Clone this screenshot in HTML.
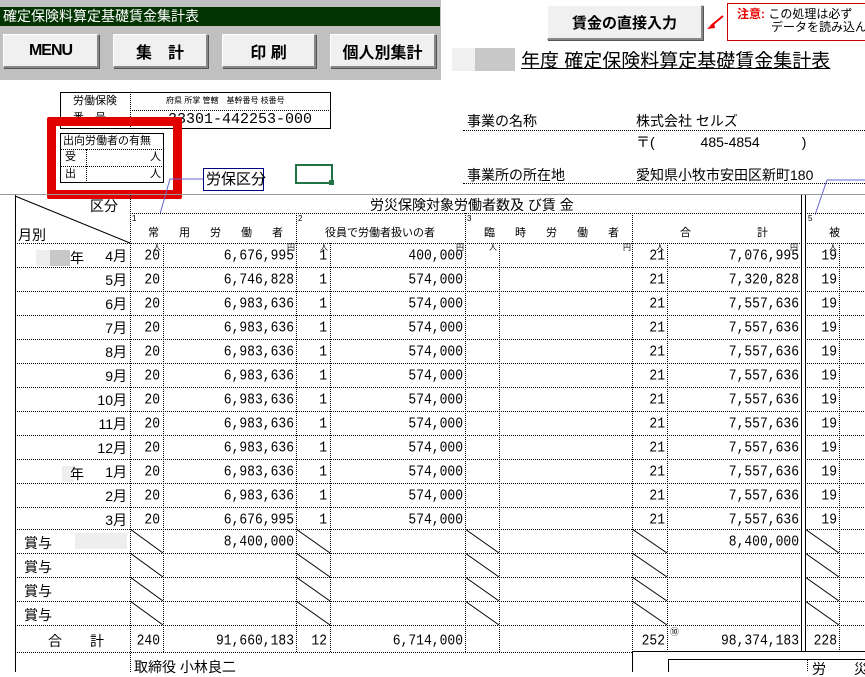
<!DOCTYPE html>
<html><head><meta charset="utf-8"><style>
*{margin:0;padding:0;box-sizing:border-box}
body{width:865px;height:672px;overflow:hidden;background:#fff;position:relative;font-family:"Liberation Sans","Noto Sans CJK JP",sans-serif;color:#000}
.a{position:absolute;white-space:nowrap;line-height:1}
.btn{position:absolute;background:#f0f0f0;border:1px solid #fff;border-right:2px solid #888;border-bottom:2px solid #888;box-shadow:1px 1px 0 #555;font-size:16px;font-weight:bold;display:flex;align-items:center;justify-content:center}
.t{position:absolute;font-size:14px;line-height:1;white-space:nowrap}
.n{font-family:"Liberation Mono",monospace;font-size:13px;transform:scaleY(1.15);transform-origin:bottom}
.r{text-align:right}
.s{position:absolute;font-size:8px;line-height:1}
</style></head><body>
<div class="a" style="left:0;top:0;width:441px;height:80px;background:#c0c0c0"></div>
<div class="a" style="left:0;top:7px;width:440px;height:19px;background:#003300;color:#fff;font-size:14px;padding:2px 3px">確定保険料算定基礎賃金集計表</div>
<div class="btn" style="left:3px;top:34px;width:96px;height:34px;letter-spacing:-1px">MENU</div>
<div class="btn" style="left:113px;top:34px;width:95px;height:34px">集　計</div>
<div class="btn" style="left:222px;top:34px;width:94px;height:34px">印 刷</div>
<div class="btn" style="left:330px;top:34px;width:106px;height:34px">個人別集計</div>
<div class="btn" style="left:547px;top:5px;width:156px;height:35px;font-size:15px">賃金の直接入力</div>
<svg class="a" style="left:703px;top:12px" width="24" height="20"><line x1="20" y1="4" x2="8" y2="14" stroke="#e00" stroke-width="2"/><polygon points="4,17 11,10 12,16" fill="#e00"/></svg>
<div class="a" style="left:727px;top:3px;width:140px;height:38px;border:1px solid #c00;font-size:12px;padding:4px 0 0 9px;line-height:13px"><b style="color:#e00">注意:</b> この処理は必ず<br><span style="padding-left:34px">データを読み込ん</span></div>
<div class="a" style="left:452px;top:48px;width:34px;height:23px;background:#f0f0f0"></div>
<div class="a" style="left:475px;top:48px;width:40px;height:23px;background:#c8c8c8"></div>
<div class="a" style="left:521px;top:52px;font-size:19px;text-decoration:underline">年度 確定保険料算定基礎賃金集計表</div>

<div class="a" style="left:60px;top:92px;width:271px;height:37px;border:1px solid #000"></div>
<div class="a" style="left:130px;top:92px;height:37px;border-left:1px dotted #000"></div>
<div class="a" style="left:130px;top:110px;width:201px;border-top:1px dotted #000"></div>
<div class="a" style="left:73px;top:96px;font-size:11px">労働保険</div>
<div class="a" style="left:166px;top:97px;font-size:8px">府県 所掌 管轄　基幹番号 枝番号</div>
<div class="a" style="left:168px;top:112px;font-size:15px;font-family:'Liberation Mono',monospace">33301-442253-000</div>
<div class="a" style="left:73px;top:113px;font-size:11px">番　号</div>
<div class="a" style="left:60px;top:133px;width:104px;height:50px;border:1px solid #000;background:#fff"></div>
<div class="a" style="left:60px;top:149px;width:104px;border-top:1px dotted #000"></div>
<div class="a" style="left:60px;top:166px;width:104px;border-top:1px dotted #000"></div>
<div class="a" style="left:86px;top:149px;height:34px;border-left:1px dotted #000"></div>
<div class="a" style="left:63px;top:136px;font-size:11px">出向労働者の有無</div>
<div class="a" style="left:65px;top:152px;font-size:11px">受</div><div class="a" style="left:150px;top:152px;font-size:11px">人</div>
<div class="a" style="left:65px;top:169px;font-size:11px">出</div><div class="a" style="left:150px;top:169px;font-size:11px">人</div>
<div class="a" style="left:47px;top:117px;width:135px;height:82px;border:9px solid #e00000;border-radius:2px"></div>
<svg class="a" style="left:160px;top:175px" width="45" height="40"><polyline points="0,39 10,4 43,4" fill="none" stroke="#6666cc" stroke-width="1"/></svg>
<div class="a" style="left:203px;top:168px;width:61px;height:23px;border:1px solid #000080;font-size:15px;padding:3px 2px">労保区分</div>
<div class="a" style="left:295px;top:164px;width:38px;height:20px;border:2px solid #217346"></div>
<div class="a" style="left:329px;top:180px;width:5px;height:5px;background:#217346"></div>

<div class="t" style="left:467px;top:114px">事業の名称</div>
<div class="t" style="left:636px;top:114px">株式会社 セルズ</div>
<div class="a" style="left:463px;top:130px;width:402px;border-top:1px dotted #000"></div>
<div class="t" style="left:636px;top:135px">〒(　　　 485-4854　　　)</div>
<div class="t" style="left:467px;top:168px">事業所の所在地</div>
<div class="t" style="left:636px;top:168px">愛知県小牧市安田区新町180</div>
<div class="a" style="left:463px;top:183px;width:402px;border-top:1px dotted #000"></div>
<svg class="a" style="left:815px;top:177px" width="50" height="40"><polyline points="0,38 12,3 50,3" fill="none" stroke="#6666cc"/></svg>

<svg class="a" style="left:0;top:0" width="865" height="672">
<g stroke="#000" fill="none">
<line x1="0" y1="194.5" x2="865" y2="194.5" stroke="#999"/>
<line x1="15.5" y1="195" x2="15.5" y2="672"/>
<line x1="15" y1="196" x2="130" y2="243"/>
<g stroke-dasharray="1,1">
<line x1="130" y1="213.5" x2="801" y2="213.5"/>
<line x1="805" y1="213.5" x2="865" y2="213.5"/>
<line x1="130.5" y1="195" x2="130.5" y2="672"/>
<line x1="296.5" y1="213" x2="296.5" y2="652"/>
<line x1="465.5" y1="213" x2="465.5" y2="652"/>
<line x1="632.5" y1="213" x2="632.5" y2="652"/>
<line x1="163.5" y1="243" x2="163.5" y2="652"/>
<line x1="330.5" y1="243" x2="330.5" y2="652"/>
<line x1="499.5" y1="243" x2="499.5" y2="652"/>
<line x1="667.5" y1="243" x2="667.5" y2="652"/>
<line x1="839.5" y1="243" x2="839.5" y2="652"/>
<line x1="15" y1="243.5" x2="801" y2="243.5"/><line x1="805" y1="243.5" x2="865" y2="243.5"/>
</g>
<line x1="801.5" y1="195" x2="801.5" y2="652"/>
<line x1="805.5" y1="195" x2="805.5" y2="652"/>
<line x1="632" y1="651.5" x2="865" y2="651.5"/>
<line x1="632.5" y1="652" x2="632.5" y2="672"/>
<line x1="668" y1="659.5" x2="865" y2="659.5"/>
<line x1="668.5" y1="659" x2="668.5" y2="672"/>
<line x1="807.5" y1="660" x2="807.5" y2="672" stroke-dasharray="1,1"/>
</g>
<g stroke="#000" stroke-dasharray="1,1" fill="none">
<line x1="15" y1="267.5" x2="801" y2="267.5"/><line x1="15" y1="291.5" x2="801" y2="291.5"/><line x1="15" y1="315.5" x2="801" y2="315.5"/><line x1="15" y1="339.5" x2="801" y2="339.5"/><line x1="15" y1="363.5" x2="801" y2="363.5"/><line x1="15" y1="387.5" x2="801" y2="387.5"/><line x1="15" y1="411.5" x2="801" y2="411.5"/><line x1="15" y1="435.5" x2="801" y2="435.5"/><line x1="15" y1="459.5" x2="801" y2="459.5"/><line x1="15" y1="483.5" x2="801" y2="483.5"/><line x1="15" y1="507.5" x2="801" y2="507.5"/><line x1="15" y1="529.5" x2="801" y2="529.5"/><line x1="15" y1="553.5" x2="801" y2="553.5"/><line x1="15" y1="577.5" x2="801" y2="577.5"/><line x1="15" y1="601.5" x2="801" y2="601.5"/><line x1="15" y1="625.5" x2="801" y2="625.5"/><line x1="15" y1="652.5" x2="632" y2="652.5"/>
<line x1="805" y1="267.5" x2="865" y2="267.5"/><line x1="805" y1="291.5" x2="865" y2="291.5"/><line x1="805" y1="315.5" x2="865" y2="315.5"/><line x1="805" y1="339.5" x2="865" y2="339.5"/><line x1="805" y1="363.5" x2="865" y2="363.5"/><line x1="805" y1="387.5" x2="865" y2="387.5"/><line x1="805" y1="411.5" x2="865" y2="411.5"/><line x1="805" y1="435.5" x2="865" y2="435.5"/><line x1="805" y1="459.5" x2="865" y2="459.5"/><line x1="805" y1="483.5" x2="865" y2="483.5"/><line x1="805" y1="507.5" x2="865" y2="507.5"/><line x1="805" y1="529.5" x2="865" y2="529.5"/><line x1="805" y1="553.5" x2="865" y2="553.5"/><line x1="805" y1="577.5" x2="865" y2="577.5"/><line x1="805" y1="601.5" x2="865" y2="601.5"/><line x1="805" y1="625.5" x2="865" y2="625.5"/>
</g>
<g stroke="#000">
<line x1="130" y1="529" x2="163" y2="553"/><line x1="296" y1="529" x2="330" y2="553"/><line x1="465" y1="529" x2="499" y2="553"/><line x1="632" y1="529" x2="667" y2="553"/><line x1="805" y1="529" x2="839" y2="553"/>
<line x1="130" y1="553" x2="163" y2="577"/><line x1="296" y1="553" x2="330" y2="577"/><line x1="465" y1="553" x2="499" y2="577"/><line x1="632" y1="553" x2="667" y2="577"/><line x1="805" y1="553" x2="839" y2="577"/>
<line x1="130" y1="577" x2="163" y2="601"/><line x1="296" y1="577" x2="330" y2="601"/><line x1="465" y1="577" x2="499" y2="601"/><line x1="632" y1="577" x2="667" y2="601"/><line x1="805" y1="577" x2="839" y2="601"/>
<line x1="130" y1="601" x2="163" y2="625"/><line x1="296" y1="601" x2="330" y2="625"/><line x1="465" y1="601" x2="499" y2="625"/><line x1="632" y1="601" x2="667" y2="625"/><line x1="805" y1="601" x2="839" y2="625"/>
</g>
</svg>

<div class="t" style="left:90px;top:199px">区分</div>
<div class="t" style="left:18px;top:228px">月別</div>
<div class="t" style="left:370px;top:198px">労災保険対象労働者数及 び賃 金</div>
<div class="s" style="left:132px;top:215px">1</div><div class="s" style="left:298px;top:215px">2</div><div class="s" style="left:467px;top:215px">3</div><div class="s" style="left:808px;top:215px">5</div>
<div class="a" style="left:148px;top:228px;font-size:11px;letter-spacing:20px">常用労働者</div>
<div class="a" style="left:325px;top:228px;font-size:11px">役員で労働者扱いの者</div>
<div class="a" style="left:484px;top:228px;font-size:11px;letter-spacing:20px">臨時労働者</div>
<div class="a" style="left:680px;top:228px;font-size:11px">合　　　　　　計</div>
<div class="a" style="left:829px;top:228px;font-size:11px">被</div>
<div class="s" style="left:153px;top:244px">人</div><div class="s" style="left:287px;top:244px">円</div><div class="s" style="left:320px;top:244px">人</div><div class="s" style="left:456px;top:244px">円</div><div class="s" style="left:489px;top:244px">人</div><div class="s" style="left:623px;top:244px">円</div><div class="s" style="left:656px;top:244px">人</div><div class="s" style="left:790px;top:244px">円</div><div class="s" style="left:829px;top:244px">人</div>

<div class="a" style="left:36px;top:250px;width:18px;height:16px;background:#eee"></div><div class="a" style="left:50px;top:250px;width:20px;height:16px;background:#c8c8c8"></div>
<div class="a" style="left:62px;top:466px;width:12px;height:16px;background:#eee"></div>
<div class="a" style="left:75px;top:533px;width:52px;height:16px;background:#eee"></div>
<div class="t" style="left:70px;top:251px">年</div>
<div class="t" style="left:70px;top:467px">年</div>

<div id="d"></div>
<script>
var m=["4月","5月","6月","7月","8月","9月","10月","11月","12月","1月","2月","3月"];
var w1=["6,676,995","6,746,828","6,983,636","6,983,636","6,983,636","6,983,636","6,983,636","6,983,636","6,983,636","6,983,636","6,983,636","6,676,995"];
var w2=["400,000"];for(var i=1;i<12;i++)w2.push("574,000");
var w4=["7,076,995","7,320,828","7,557,636","7,557,636","7,557,636","7,557,636","7,557,636","7,557,636","7,557,636","7,557,636","7,557,636","7,557,636"];
var h="";
function c(r,y,t){return '<div class="t r" style="width:100px;left:'+(r-100)+'px;top:'+y+'px">'+t+'</div>';}
function n(r,y,t){return '<div class="t r n" style="width:100px;left:'+(r-100)+'px;top:'+(y+1)+'px">'+t+'</div>';}
for(var i=0;i<12;i++){var y=249+24*i;
h+=c(127,y,m[i])+n(160,y,"20")+n(294,y,w1[i])+n(327,y,"1")+n(463,y,w2[i])+n(665,y,"21")+n(799,y,w4[i])+n(837,y,"19");}
for(var j=0;j<4;j++){h+='<div class="t" style="left:24px;top:'+(536+24*j)+'px">賞与</div>';}
h+=n(294,535,"8,400,000")+n(799,535,"8,400,000");
h+='<div class="t" style="left:48px;top:634px">合　　計</div>';
h+=n(160,634,"240")+n(294,634,"91,660,183")+n(327,634,"12")+n(463,634,"6,714,000")+n(665,634,"252")+n(799,634,"98,374,183")+n(837,634,"228");
h+='<div class="a" style="left:670px;top:628px;font-size:9px">⑩</div>';
h+='<div class="t" style="left:134px;top:660px">取締役 小林良二</div>';
h+='<div class="t" style="left:812px;top:662px">労　　災</div>';
document.getElementById("d").innerHTML=h;
</script>
</body></html>
